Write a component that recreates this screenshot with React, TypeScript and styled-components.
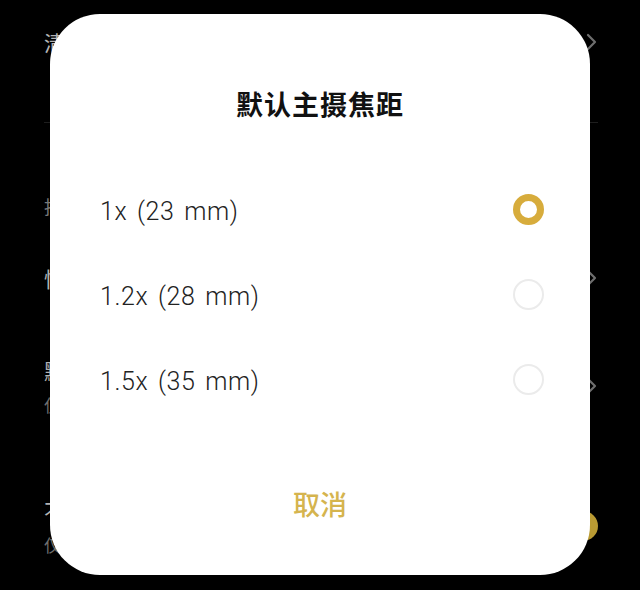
import styled, { createGlobalStyle } from "styled-components";

const GlobalStyle = createGlobalStyle`
  html, body {
    margin: 0;
    padding: 0;
    background: #000;
  }
  * {
    box-sizing: border-box;
  }
`;

const Screen = styled.div`
  position: relative;
  width: 640px;
  height: 590px;
  overflow: hidden;
  background: #000;
  padding: 20px 42px 0 44px;
  display: flex;
  flex-direction: column;
  font-family: "Noto Sans", "Noto Sans CJK SC", sans-serif;
`;

const SettingRow = styled.div<{ $top: number; $height?: number }>`
  margin-top: ${(p) => p.$top}px;
  min-height: ${(p) => p.$height ?? 0}px;
  display: flex;
  align-items: center;
  justify-content: space-between;
`;

const SettingText = styled.div`
  display: flex;
  flex-direction: column;
`;

const SettingTitle = styled.div`
  font-family: "Noto Sans CJK SC", sans-serif;
  font-size: 21px;
  line-height: 30px;
  color: #b4b4b4;
`;

const SettingSub = styled.div`
  margin-top: 8px;
  font-family: "Noto Sans CJK SC", sans-serif;
  font-size: 17px;
  line-height: 24px;
  color: #6e6e6e;
`;

const SectionHeader = styled.div`
  margin-top: 72px;
  font-family: "Noto Sans CJK SC", sans-serif;
  font-size: 18px;
  line-height: 22px;
  color: #7a7a7a;
`;

const Divider = styled.div`
  margin-top: 58px;
  height: 1px;
  background: #1e1e1e;
`;

const Switch = styled.div`
  width: 56px;
  height: 30px;
  border-radius: 15px;
  background: #b99a33;
`;

const Chevron = () => (
  <svg width="12" height="18" viewBox="0 0 12 18" fill="none">
    <path d="M2 2l7 7-7 7" stroke="#6e6e6e" strokeWidth="2.2" strokeLinecap="round" strokeLinejoin="round" />
  </svg>
);

const Dialog = styled.div`
  position: absolute;
  left: 50px;
  top: 14px;
  width: 540px;
  height: 561px;
  border-radius: 50px;
  background: #fff;
  padding: 72px 45px 0 50px;
  display: flex;
  flex-direction: column;
`;

const DialogTitle = styled.div`
  font-family: "Noto Sans CJK SC", sans-serif;
  font-weight: 700;
  font-size: 27px;
  line-height: 36px;
  letter-spacing: 1px;
  text-align: center;
  color: #111;
  margin-right: 5px;
`;

const OptionList = styled.div`
  margin-top: 45px;
  display: flex;
  flex-direction: column;
`;

const Option = styled.div`
  height: 85px;
  display: flex;
  align-items: center;
  justify-content: space-between;
`;

const OptionLabel = styled.span`
  margin-top: 3px;
  font-family: Roboto, "Noto Sans", sans-serif;
  font-weight: 300;
  font-size: 25px;
  letter-spacing: 0.6px;
  word-spacing: 3px;
  color: #222;
`;

const Radio = styled.span<{ $checked?: boolean }>`
  width: 31px;
  height: 31px;
  margin-right: 1px;
  border-radius: 50%;
  border: ${(p) => (p.$checked ? "7px solid #d7ac3c" : "2px solid #ebebeb")};
  background: #fff;
`;

const CancelButton = styled.div`
  margin-top: 62px;
  font-family: "Noto Sans CJK SC", sans-serif;
  font-weight: 500;
  font-size: 27px;
  line-height: 40px;
  text-align: center;
  color: #d5b44e;
  margin-right: 5px;
`;

const options = [
  { label: "1x (23 mm)", checked: true },
  { label: "1.2x (28 mm)", checked: false },
  { label: "1.5x (35 mm)", checked: false },
];

export default function App() {
  return (
    <>
      <GlobalStyle />
      <Screen>
        <SettingRow $top={0} $height={44}>
          <SettingTitle>清晰度</SettingTitle>
          <Chevron />
        </SettingRow>
        <Divider />
        <SectionHeader>拍摄设置</SectionHeader>
        <SettingRow $top={46} $height={30}>
          <SettingTitle>快捷手势</SettingTitle>
          <Chevron />
        </SettingRow>
        <SettingRow $top={62}>
          <SettingText>
            <SettingTitle>默认主摄焦距</SettingTitle>
            <SettingSub>仅在主摄模式下生效</SettingSub>
          </SettingText>
          <Chevron />
        </SettingRow>
        <SettingRow $top={78}>
          <SettingText>
            <SettingTitle>不保留原图</SettingTitle>
            <SettingSub>仅对部分模式生效</SettingSub>
          </SettingText>
          <Switch />
        </SettingRow>

        <Dialog>
          <DialogTitle>默认主摄焦距</DialogTitle>
          <OptionList>
            {options.map((o) => (
              <Option key={o.label}>
                <OptionLabel>{o.label}</OptionLabel>
                <Radio $checked={o.checked} />
              </Option>
            ))}
          </OptionList>
          <CancelButton>取消</CancelButton>
        </Dialog>
      </Screen>
    </>
  );
}
